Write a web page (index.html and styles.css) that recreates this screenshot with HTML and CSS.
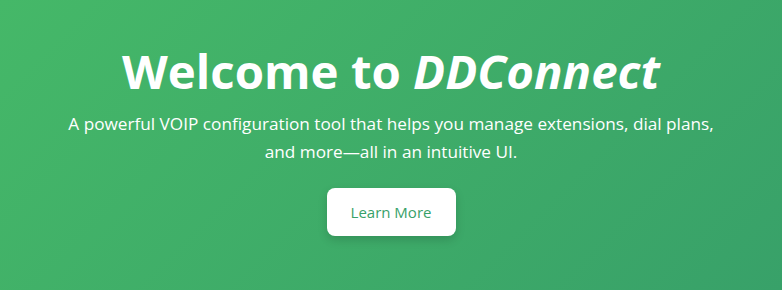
FILE: index.html
```html
<!DOCTYPE html>
<html>
<head>
<meta charset="utf-8">
<link rel="stylesheet" href="styles.css">
</head>
<body>
<section class="hero">
  <h1 class="title">Welcome to <em>DDConnect</em></h1>
  <p class="lead">A powerful VOIP configuration tool that helps you manage extensions, dial plans, and more—all in an intuitive UI.</p>
  <a class="btn" href="#">Learn More</a>
</section>
</body>
</html>
```
FILE: styles.css
```css
html, body { margin: 0; padding: 0; }
body {
  font-family: "Open Sans", "Noto Sans", sans-serif;
  height: 290px;
}
.hero {
  height: 290px;
  box-sizing: border-box;
  display: flex;
  flex-direction: column;
  align-items: center;
  text-align: center;
  color: #fff;
  padding-top: 39px;
  background: linear-gradient(135deg, #45b868 0%, #38a169 100%);
}
.title {
  margin: 0;
  font-size: 47.4px;
  font-weight: 700;
  line-height: 64px;
}
.title em { font-style: italic; }
.lead {
  margin: 7px 0 0;
  font-size: 17.2px;
  line-height: 28px;
  max-width: 680px;
}
.btn {
  margin-top: 22px;
  display: inline-block;
  background: #fff;
  color: #38a169;
  text-decoration: none;
  font-size: 15px;
  height: 48px;
  line-height: 48px;
  width: 129px;
  box-sizing: border-box;
  border-radius: 8px;
  box-shadow: 0 4px 10px rgba(0,0,0,0.15);
}
```
